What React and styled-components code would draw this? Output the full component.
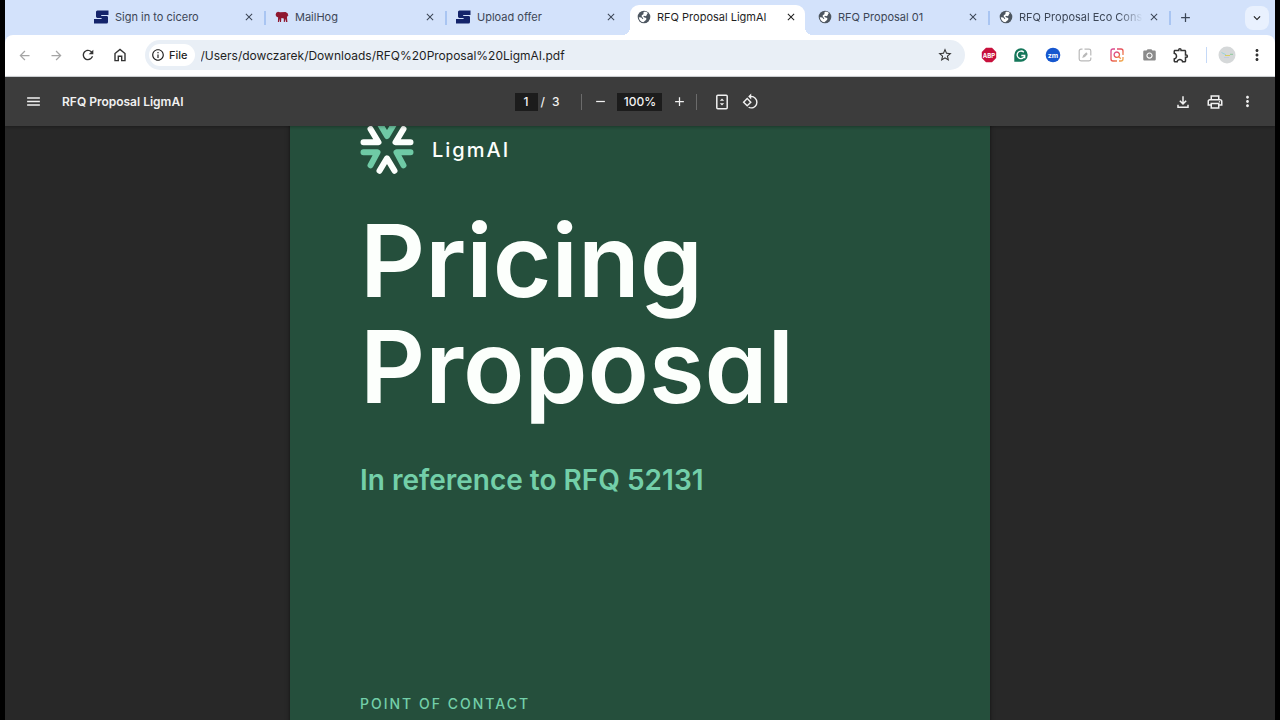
import { Fragment, useState } from "react";
import styled, { createGlobalStyle } from "styled-components";
import {
  MdAdd,
  MdArrowBack,
  MdArrowForward,
  MdClose,
  MdInfoOutline,
  MdKeyboardArrowDown,
  MdMenu,
  MdMoreVert,
  MdOutlineExtension,
  MdOutlinePrint,
  MdPhotoCamera,
  MdRefresh,
  MdRemove,
  MdRotate90DegreesCcw,
  MdStarBorder,
} from "react-icons/md";

const GlobalStyle = createGlobalStyle`
  * {
    box-sizing: border-box;
  }

  body {
    margin: 0;
    background: #000;
    font-family: Inter, "Liberation Sans", sans-serif;
  }

  button, input {
    font: inherit;
    color: inherit;
  }
`;

const Browser = styled.div`
  display: flex;
  flex-direction: column;
  height: 100vh;
  margin: 0 5px;
  background: #282828;
`;

/* Tabs */

const TabStrip = styled.div`
  display: flex;
  align-items: stretch;
  height: 35px;
  padding: 0 6px 0 80px;
  background: #d3e2fb;
`;

const Tab = styled.div`
  display: flex;
  align-items: center;
  flex: 0 1 ${props => (props.$active ? "175px" : "181px")};
  min-width: 0;
  margin: ${props => (props.$active ? "5px 4px 0 2px" : "0")};
  padding: ${props => (props.$active ? "0 7px 6px 7px" : "0 10px 1px 9px")};
  position: relative;
  border-radius: 9px 9px 0 0;
  background: ${props => (props.$active ? "#fff" : "transparent")};
  color: ${props => (props.$active ? "#1f1f1f" : "#3c4656")};

  &::before, &::after {
    content: "";
    display: ${props => (props.$active ? "block" : "none")};
    position: absolute;
    bottom: 0;
    width: 8px;
    height: 8px;
  }
  &::before {
    left: -8px;
    background: radial-gradient(circle at 0 0, transparent 8px, #fff 8px);
  }
  &::after {
    right: -8px;
    background: radial-gradient(circle at 100% 0, transparent 8px, #fff 8px);
  }
`;

const TabDivider = styled.span`
  align-self: center;
  width: 2px;
  height: 14px;
  margin-left: -2px;
  background: #a9c5f2;
`;

const TabTitle = styled.span`
  flex: 1;
  min-width: 0;
  margin: 0 4px 0 6px;
  font-size: 11px;
  line-height: 16px;
  white-space: nowrap;
  overflow: hidden;
  ${props => props.$fade && "mask-image: linear-gradient(to right, #000 80%, transparent);"}
`;

const IconButton = styled.button`
  display: flex;
  justify-content: center;
  align-items: center;
  flex: none;
  width: ${props => props.$width || 32}px;
  height: 28px;
  padding: 0;
  border: 0;
  background: none;
  color: ${props => props.$color || "inherit"};
`;

const NewTabButton = styled(IconButton)`
  align-self: center;
  color: #3c4656;
`;

const TabMenuButton = styled(IconButton)`
  align-self: center;
  width: 24px;
  height: 24px;
  margin-left: auto;
  border-radius: 8px;
  background: #e9f1fe;
  color: #1f1f1f;
`;

/* Address bar */

const AddressBackdrop = styled.div`
  background: #d3e2fb;
`;

const AddressBar = styled.div`
  display: flex;
  align-items: center;
  height: 42px;
  padding: 0 4px 1px 3px;
  border-bottom: 1px solid #d5d8dc;
  border-radius: 8px 8px 0 0;
  background: #fff;
  color: #333;
`;

const Omnibox = styled.div`
  display: flex;
  align-items: center;
  flex: 1;
  height: 30px;
  margin: 0 8px 0 9px;
  padding: 0 4px;
  border-radius: 15px;
  background: #e9eff6;
`;

const FileChip = styled.button`
  display: flex;
  align-items: center;
  gap: 4px;
  height: 22px;
  padding: 0 7px 0 2px;
  border: 0;
  border-radius: 11px;
  background: #fff;
  color: #1f1f1f;
  font-size: 11px;
  font-weight: 500;
`;

const UrlInput = styled.input`
  flex: 1;
  min-width: 0;
  margin-left: 6px;
  padding: 0;
  border: 0;
  outline: 0;
  background: none;
  color: #1f1f1f;
  font-size: 12px;
`;

const BarDivider = styled.span`
  width: 1px;
  height: 16px;
  margin: ${props => props.$margin || 0};
  background: ${props => props.$color};
`;

/* PDF viewer */

const PdfToolbar = styled.div`
  display: grid;
  grid-template-columns: 1fr auto 1fr;
  align-items: center;
  flex: none;
  height: 49px;
  padding: 0 12px;
  background: #3c3c3c;
  color: #f1f1f1;
  font-size: 12px;
  font-weight: 500;
  position: relative;
  box-shadow: 0 1px 3px rgba(0, 0, 0, 0.3);
`;

const ToolbarGroup = styled.div`
  display: flex;
  align-items: center;
  justify-content: ${props => props.$align || "flex-start"};
`;

const FileName = styled.h1`
  margin: 0 0 0 13px;
  font-size: 12px;
  font-weight: 600;
`;

const ToolbarField = styled.input`
  width: ${props => props.$width}px;
  height: 18px;
  padding: 0;
  border: 0;
  background: #1c1c1c;
  text-align: center;
`;

const PageCount = styled.span`
  display: flex;
  gap: 7px;
  margin-left: 3px;
`;

const Viewport = styled.main`
  flex: 1;
  min-height: 0;
  overflow: hidden;
  padding: 0 24px;
`;

const PdfPage = styled.article`
  width: 100%;
  max-width: 700px;
  min-height: 900px;
  margin: -78px auto 0;
  padding: 70px;
  background: #254f3c;
  box-shadow: 0 0 4px rgba(0, 0, 0, 0.6);
  color: #fcfffc;
`;

const Brand = styled.div`
  display: flex;
  align-items: center;
  gap: 18px;
  font-size: 20px;
  font-weight: 500;
  letter-spacing: 2px;
`;

const CoverTitle = styled.h2`
  margin: 25px 0 0;
  font-size: 101px;
  font-weight: 600;
  line-height: 106px;
  font-feature-settings: "cv11";
`;

const Reference = styled.p`
  margin: 43px 0 0;
  color: #73cfa9;
  font-size: 28px;
  font-weight: 600;
  line-height: 36px;
`;

const ContactHeading = styled.h3`
  margin: 196px 0 0;
  color: #73cfa9;
  font-size: 14px;
  font-weight: 500;
  line-height: 20px;
  letter-spacing: 2px;
`;

const CiceroIcon = () => (
  <svg width="15" height="14" viewBox="0 0 15 14" fill="#14246b">
    <path d="M3.4.5H14.5V4.9H7.2V5.9H12.6Q14 5.9 14 7.3V12Q14 13.5 12.5 13.5H0V9H7.6V8H3.4Q2 8 2 6.6V2Q2 .5 3.4.5Z" />
  </svg>
);

const MailHogIcon = () => (
  <svg width="14" height="14" viewBox="0 0 14 14" fill="#8f1830">
    <path d="M.6 5 1.2 2.7 3 1.8 5 2.3 10.5 2 12.6 3.2 13.3 5.5 12.7 6.7 12.2 5.4 12 7.6 12.4 12H11L10.4 8.8 9.8 12H8.8V8.4L6.4 8 6 12H4.9L4.6 8.6 4 12H2.9L3.1 7.3 1.8 6.9Z" />
  </svg>
);

const GlobeIcon = () => (
  <svg width="14" height="14" viewBox="0 0 14 14">
    <circle cx="7" cy="7" r="6.3" fill="#4d5660" />
    <path d="M6.6 1.9C8.200 1.500 10 2 11 3.200L9.800 3.900 10 5 8.500 6.200 7 5.800 6.300 6.700 7.500 7.600 9.300 8 9.200 9.800 7.500 11.300 6.300 12.200C3.700 11.900 1.900 9.900 1.800 7.300L4.300 7.600 5.600 9.200 6.300 8.200 4.800 6.700 4.700 5.200 6.400 4.200Z" fill="#fff" />
  </svg>
);

const HomeIcon = () => (
  <svg width="14" height="14" viewBox="0 0 14 14" fill="none" stroke="#333" strokeWidth="1.4">
    <path d="M2 12.6V5.5L7 1.5l5 4v7.1H8.7V8.3H5.3v4.3Z" />
  </svg>
);

const AdblockIcon = () => (
  <svg width="16" height="16" viewBox="0 0 16 16">
    <path d="M5 .8h6L15.2 5v6L11 15.2H5L.8 11V5Z" fill="#c8103c" />
    <text x="8" y="10.500" fill="#fff" fontSize="6" fontWeight="700" textAnchor="middle">ABP</text>
  </svg>
);

const GrammarIcon = () => (
  <svg width="14" height="14" viewBox="0 0 14 14">
    <path d="M7 .3A6.7 6.7 0 1 1 7 13.7H.3V7A6.7 6.7 0 0 1 7 .3Z" fill="#15775a" />
    <path d="M9.8 4.3A3.8 3.8 0 1 0 10.7 7.5H7.3M10.7 7.3v2.9" fill="none" stroke="#fff" strokeWidth="1.3" />
  </svg>
);

const ZoomIcon = () => (
  <svg width="16" height="16" viewBox="0 0 16 16">
    <circle cx="8" cy="8" r="7.3" fill="#1657cf" />
    <text x="8" y="10.500" fill="#fff" fontSize="7" fontWeight="700" textAnchor="middle">zm</text>
  </svg>
);

const NoteIcon = () => (
  <svg width="14" height="14" viewBox="0 0 14 14" fill="none" stroke="#b9b9b9" strokeWidth="1.2">
    <path d="M4.5 1.2H3A1.8 1.8 0 0 0 1.2 3v8A1.8 1.8 0 0 0 3 12.8h8a1.8 1.8 0 0 0 1.8-1.8V9.5M6.5 1.2H11A1.8 1.8 0 0 1 12.800 3v4.5" />
    <path d="M5.2 9 5.7 7.5 8.300 5.200 8.900 5.900 6.600 8.400Z" />
  </svg>
);

const ImageSearchIcon = () => (
  <svg width="14" height="14" viewBox="0 0 14 14" fill="none" strokeWidth="1.3">
    <defs>
      <linearGradient id="warm" x1="0" y1="0" x2="1" y2="1">
        <stop offset="0" stopColor="#d8489b" />
        <stop offset="0.5" stopColor="#e8514f" />
        <stop offset="1" stopColor="#f2b14d" />
      </linearGradient>
    </defs>
    <g stroke="url(#warm)">
      <path d="M5 1H3a2 2 0 0 0-2 2v8a2 2 0 0 0 2 2h4M7 1h4a2 2 0 0 1 2 2v4M9 13h2a2 2 0 0 0 2-2V9" />
      <path d="M6.8 4a2.7 2.7 0 1 1-.01 0M8.8 8.8l2 2" />
    </g>
  </svg>
);

const AvatarIcon = () => (
  <svg width="18" height="18" viewBox="0 0 18 18" fill="none">
    <circle cx="9" cy="9" r="8.5" fill="#d5d8d9" />
    <path d="M3.5 6.5 8 8.8" stroke="#9bd3d8" />
    <path d="M7 9.5h5" stroke="#d8cd62" />
    <path d="M12 8.3h3" stroke="#8cc89a" />
    <path d="M6 11.5h5" stroke="#c3cbe0" />
  </svg>
);

const FitPageIcon = () => (
  <svg width="14" height="16" viewBox="0 0 14 16" fill="none" stroke="#f1f1f1" strokeWidth="1.5">
    <rect x="1.8" y="1.3" width="10.4" height="13.4" rx="1" />
    <path d="M4.8 6.8 7 4.5 9.2 6.8ZM4.8 9.2 7 11.5 9.2 9.2Z" fill="#f1f1f1" stroke="none" />
  </svg>
);

const DownloadIcon = () => (
  <svg width="14" height="14" viewBox="0 0 14 14" fill="none" stroke="#f1f1f1" strokeWidth="1.5">
    <path d="M7 1.3v7.5M3.8 5.7 7 8.9l3.2-3.2M2 9.8v2.5h10V9.8" />
  </svg>
);

const LigmLogo = () => (
  <svg width="54" height="64" viewBox="0 0 54 64" fill="none" strokeWidth="6" strokeLinecap="round" strokeLinejoin="round">
    <path d="M10.5 11 18.5 24.3H3.5M43.5 11 35.5 24.3H50.5M19.500 52.8 27 40.3 34.5 52.8" stroke="#fcfffc" />
    <path d="M10.5 47.3 17.5 34.3H3.5M43.5 47.3 36.5 34.3H50.5M19.5 5.3 27 18 34.5 5.3" stroke="#6fcaa5" />
  </svg>
);

const tabs = [
  { title: "Sign in to cicero", icon: <CiceroIcon />, divider: true },
  { title: "MailHog", icon: <MailHogIcon />, divider: true },
  { title: "Upload offer", icon: <CiceroIcon /> },
  { title: "RFQ Proposal LigmAI", icon: <GlobeIcon />, active: true },
  { title: "RFQ Proposal 01", icon: <GlobeIcon />, divider: true },
  { title: "RFQ Proposal Eco Cons", icon: <GlobeIcon />, divider: true, fade: true },
];

const extensions = [
  { name: "Adblock Plus", icon: <AdblockIcon /> },
  { name: "Grammar", icon: <GrammarIcon /> },
  { name: "Zoom", icon: <ZoomIcon /> },
  { name: "Notes", icon: <NoteIcon /> },
  { name: "Image search", icon: <ImageSearchIcon /> },
  { name: "Screenshot", icon: <MdPhotoCamera size={15} color="#8b8b8b" /> },
  { name: "Extensions", icon: <MdOutlineExtension size={18} /> },
];

const App = () => {
  const [url, setUrl] = useState("/Users/dowczarek/Downloads/RFQ%20Proposal%20LigmAI.pdf");
  const [page, setPage] = useState("1");
  const [zoom, setZoom] = useState("100%");

  return (
    <Browser>
      <GlobalStyle />
      <TabStrip>
        {tabs.map(tab => (
          <Fragment key={tab.title}>
            <Tab $active={tab.active}>
              {tab.icon}
              <TabTitle $fade={tab.fade}>{tab.title}</TabTitle>
              <IconButton $width={14} aria-label="Close tab">
                <MdClose size={12} />
              </IconButton>
            </Tab>
            {tab.divider && <TabDivider />}
          </Fragment>
        ))}
        <NewTabButton $width={28} aria-label="New tab">
          <MdAdd size={15} />
        </NewTabButton>
        <TabMenuButton aria-label="Search tabs">
          <MdKeyboardArrowDown size={14} />
        </TabMenuButton>
      </TabStrip>

      <AddressBackdrop>
        <AddressBar>
          <IconButton $color="#a5a5a5" aria-label="Back"><MdArrowBack size={15} /></IconButton>
          <IconButton $color="#a5a5a5" aria-label="Forward"><MdArrowForward size={15} /></IconButton>
          <IconButton aria-label="Reload"><MdRefresh size={16} /></IconButton>
          <IconButton aria-label="Home"><HomeIcon /></IconButton>
          <Omnibox>
            <FileChip><MdInfoOutline size={14} />File</FileChip>
            <UrlInput aria-label="Address" value={url} onChange={e => setUrl(e.target.value)} />
            <IconButton aria-label="Bookmark"><MdStarBorder size={16} /></IconButton>
          </Omnibox>
          {extensions.map(extension => (
            <IconButton key={extension.name} aria-label={extension.name}>{extension.icon}</IconButton>
          ))}
          <BarDivider $color="#c5d9f7" $margin="0 4px 0 9px" />
          <IconButton aria-label="Profile"><AvatarIcon /></IconButton>
          <IconButton $width={28} aria-label="Menu"><MdMoreVert size={18} /></IconButton>
        </AddressBar>
      </AddressBackdrop>

      <PdfToolbar>
        <ToolbarGroup>
          <IconButton aria-label="Menu"><MdMenu size={17} /></IconButton>
          <FileName>RFQ Proposal LigmAI</FileName>
        </ToolbarGroup>
        <ToolbarGroup>
          <ToolbarField $width={23} aria-label="Page" value={page} onChange={e => setPage(e.target.value)} />
          <PageCount><span>/</span><span>3</span></PageCount>
          <BarDivider $color="#6b6b6b" $margin="0 1px 0 22px" />
          <IconButton $width={34} aria-label="Zoom out"><MdRemove size={15} /></IconButton>
          <ToolbarField $width={45} aria-label="Zoom" value={zoom} onChange={e => setZoom(e.target.value)} />
          <IconButton $width={34} aria-label="Zoom in"><MdAdd size={15} /></IconButton>
          <BarDivider $color="#6b6b6b" $margin="0 10px 0 0" />
          <IconButton $width={29} aria-label="Fit to page"><FitPageIcon /></IconButton>
          <IconButton $width={29} aria-label="Rotate"><MdRotate90DegreesCcw size={17} /></IconButton>
        </ToolbarGroup>
        <ToolbarGroup $align="flex-end">
          <IconButton aria-label="Download"><DownloadIcon /></IconButton>
          <IconButton aria-label="Print"><MdOutlinePrint size={18} /></IconButton>
          <IconButton aria-label="More"><MdMoreVert size={17} /></IconButton>
        </ToolbarGroup>
      </PdfToolbar>

      <Viewport>
        <PdfPage>
          <Brand><LigmLogo />LigmAI</Brand>
          <CoverTitle>Pricing<br />Proposal</CoverTitle>
          <Reference>In reference to RFQ 52131</Reference>
          <ContactHeading>POINT OF CONTACT</ContactHeading>
        </PdfPage>
      </Viewport>
    </Browser>
  );
};

export default App;
